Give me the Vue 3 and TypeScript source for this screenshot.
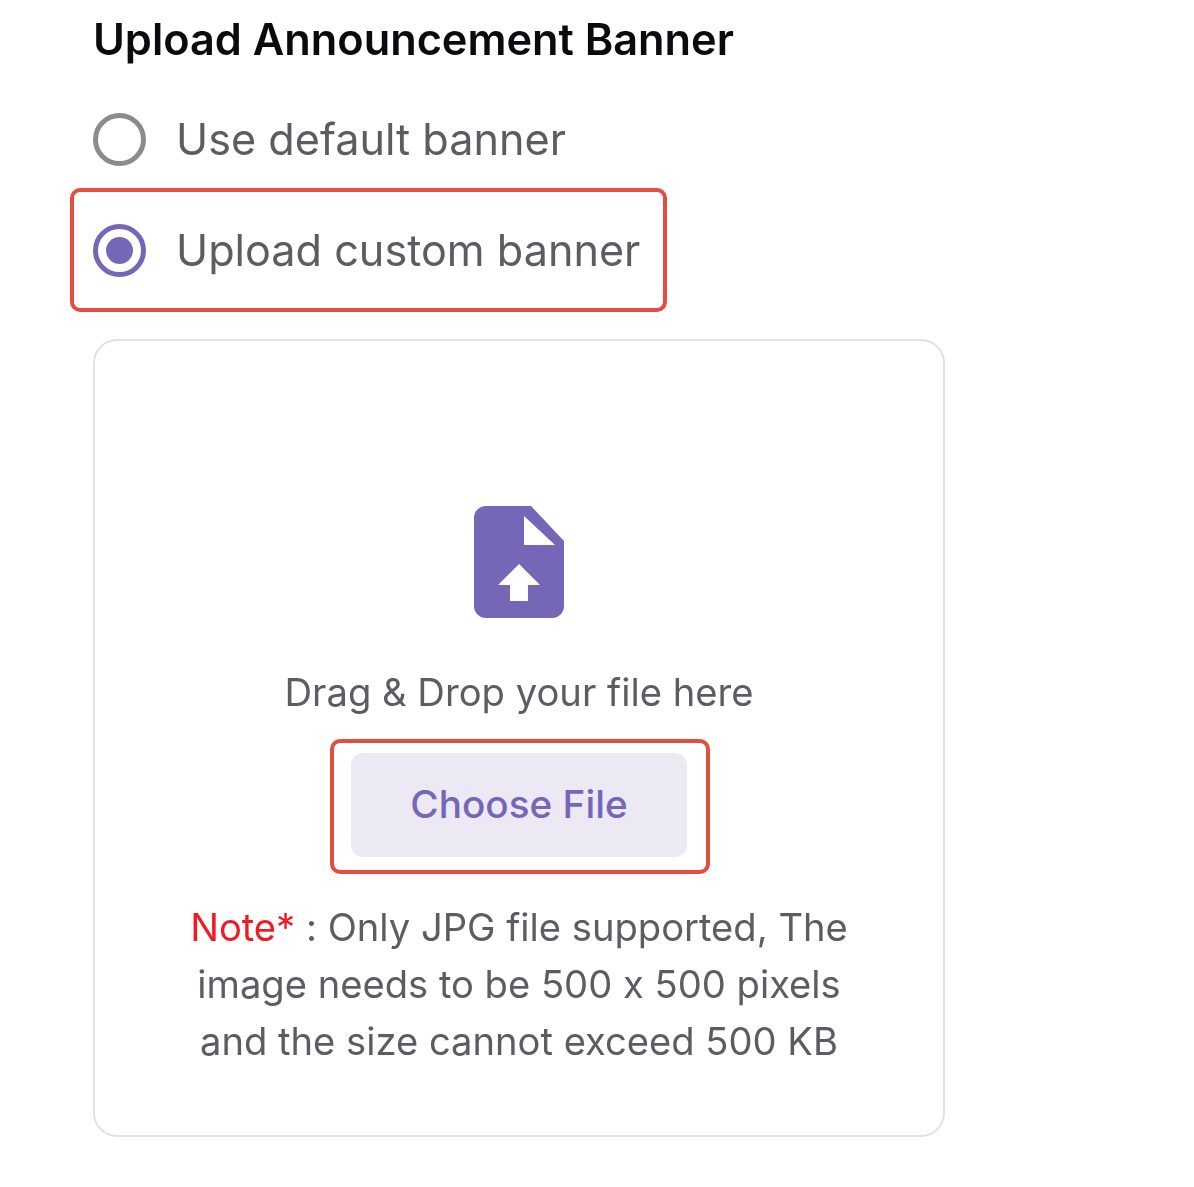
<script setup lang="ts">
const options = [
  { id: 'default', label: 'Use default banner', checked: false },
  { id: 'custom', label: 'Upload custom banner', checked: true }
];
</script>

<template>
  <div class="page">
    <h2 class="title">Upload Announcement Banner</h2>
    <div class="options">
      <div v-for="opt in options" :key="opt.id" class="option" :class="{ marked: opt.checked }">
        <span class="radio" :class="{ checked: opt.checked }"></span>
        <span class="label">{{ opt.label }}</span>
      </div>
    </div>
    <div class="dropzone">
      <svg class="file-icon" width="92" height="112" viewBox="0 0 92 112">
        <path d="M13 0H58L91 35V100a12 12 0 0 1-12 12H13A12 12 0 0 1 1 100V12A12 12 0 0 1 13 0Z" fill="#7566b8" />
        <path d="M51 10 82 39H51Z" fill="#fff" />
        <path d="M46 58 67 79H55V95H37V79H25Z" fill="#fff" />
      </svg>
      <p class="drag">Drag &amp; Drop your file here</p>
      <div class="button-mark">
        <button class="choose" type="button">Choose File</button>
      </div>
      <p class="note"><span class="red">Note*</span> : Only JPG file supported, The<br />image needs to be 500 x 500 pixels<br />and the size cannot exceed 500 KB</p>
    </div>
  </div>
</template>

<style scoped>
.page {
  width: 1194px;
  height: 1187px;
  box-sizing: border-box;
  padding: 15px 0 0 93px;
  background: #fff;
  font-family: Inter, "Liberation Sans", sans-serif;
  font-feature-settings: "calt" 0;
  overflow: hidden;
}

.title {
  margin: 0;
  font-size: 43.3px;
  line-height: 48px;
  font-weight: 600;
  color: #0b0b0f;
  filter: blur(0.5px);
}

.options {
  margin-top: 26px;
  display: flex;
  flex-direction: column;
  gap: 11px;
}

.option {
  display: flex;
  align-items: center;
  gap: 30px;
  height: 100px;
  position: relative;
  width: fit-content;
}

.option.marked::after {
  content: "";
  position: absolute;
  left: -23px;
  right: -27px;
  top: -12px;
  bottom: -12px;
  border: 4px solid #e34f3f;
  border-radius: 10px;
}

.radio {
  width: 53px;
  height: 53px;
  box-sizing: border-box;
  border: 5px solid #8a8a8f;
  border-radius: 50%;
  display: flex;
  align-items: center;
  justify-content: center;
  filter: blur(0.4px);
}

.radio.checked {
  border-color: #7566b8;
}

.radio.checked::before {
  content: "";
  width: 27px;
  height: 27px;
  border-radius: 50%;
  background: #7566b8;
}

.label {
  font-size: 43.2px;
  line-height: 50px;
  color: #5c5c63;
  filter: blur(0.5px);
}

.dropzone {
  margin-top: 39px;
  width: 852px;
  height: 798px;
  box-sizing: border-box;
  border: 2px solid #e2e2e4;
  border-radius: 24px;
  padding-top: 165px;
  display: flex;
  flex-direction: column;
  align-items: center;
}

.file-icon {
  filter: blur(0.5px);
}

.drag {
  margin: 53px 0 0;
  font-size: 38.2px;
  line-height: 42px;
  color: #5c5c63;
  filter: blur(0.5px);
}

.button-mark {
  margin: 26px 0 0 2px;
  padding: 10px 19px 13px 17px;
  border: 4px solid #e34f3f;
  border-radius: 10px;
}

.choose {
  display: block;
  width: 336px;
  height: 104px;
  padding: 0 0 3px;
  border: 0;
  border-radius: 12px;
  background: #ece9f5;
  color: #7566b8;
  font-family: inherit;
  font-feature-settings: inherit;
  font-size: 38.7px;
  font-weight: 500;
}

.note {
  margin: 25px 0 0;
  text-align: center;
  font-size: 38.15px;
  line-height: 57px;
  color: #5c5c63;
  filter: blur(0.5px);
}

.red {
  color: #f01a24;
}
</style>
